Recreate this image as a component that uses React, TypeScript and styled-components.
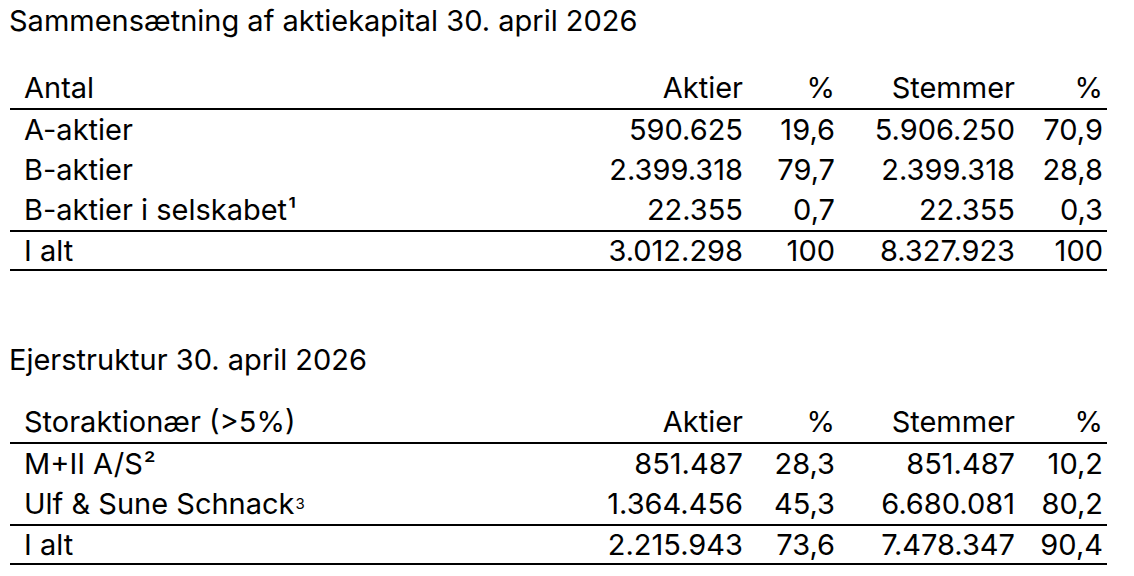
import styled, { createGlobalStyle } from 'styled-components';

const GlobalStyle = createGlobalStyle`
  html, body {
    margin: 0;
    padding: 0;
    background: #ffffff;
  }
  body {
    font-family: Inter, 'Liberation Sans', Arial, sans-serif;
    color: #000000;
  }
`;

const Page = styled.div`
  width: 1134px;
  height: 576px;
  padding-top: 1px;
  box-sizing: border-box;
  overflow: hidden;
`;

const Title = styled.h2<{ $gap: number }>`
  margin: ${({ $gap }) => $gap}px 0 0 9px;
  font-size: 29px;
  font-weight: 400;
  line-height: 40px;
`;

const Table = styled.div<{ $gap: number }>`
  margin: ${({ $gap }) => $gap}px 0 0 10px;
  width: 1097px;
  font-size: 29px;
`;

const Row = styled.div<{ $kind?: 'head' | 'total' }>`
  display: grid;
  grid-template-columns: 1fr 200px 92px 180px 88px;
  align-items: center;
  padding: 0 4px 0 14px;
  height: ${({ $kind }) => ($kind === 'total' ? 37 : 40)}px;
  line-height: ${({ $kind }) => ($kind === 'total' ? 37 : 40)}px;
  border-top: ${({ $kind }) => ($kind === 'total' ? '2px solid #000' : 'none')};
  border-bottom: ${({ $kind }) =>
    $kind === 'head' || $kind === 'total' ? '2px solid #000' : 'none'};
`;

const Label = styled.span`
  white-space: nowrap;
`;

const Num = styled.span`
  text-align: right;
  white-space: nowrap;
`;

const Note = styled.span<{ $small?: boolean }>`
  font-size: ${({ $small }) => ($small ? '15px' : '27px')};
  vertical-align: ${({ $small }) => ($small ? '5px' : '0')};
  line-height: 0;
  margin-left: 1px;
`;

type Line = { label: React.ReactNode; values: string[] };

const capital: Line[] = [
  { label: 'A-aktier', values: ['590.625', '19,6', '5.906.250', '70,9'] },
  { label: 'B-aktier', values: ['2.399.318', '79,7', '2.399.318', '28,8'] },
  {
    label: (
      <>
        B-aktier i selskabet<Note>¹</Note>
      </>
    ),
    values: ['22.355', '0,7', '22.355', '0,3'],
  },
];

const owners: Line[] = [
  {
    label: (
      <>
        M+II A/S<Note>²</Note>
      </>
    ),
    values: ['851.487', '28,3', '851.487', '10,2'],
  },
  {
    label: (
      <>
        Ulf &amp; Sune Schnack<Note $small>3</Note>
      </>
    ),
    values: ['1.364.456', '45,3', '6.680.081', '80,2'],
  },
];

function DataTable({
  gap,
  head,
  rows,
  total,
}: {
  gap: number;
  head: string;
  rows: Line[];
  total: string[];
}) {
  return (
    <Table $gap={gap}>
      <Row $kind="head">
        <Label>{head}</Label>
        <Num>Aktier</Num>
        <Num>%</Num>
        <Num>Stemmer</Num>
        <Num>%</Num>
      </Row>
      {rows.map((r, i) => (
        <Row key={i}>
          <Label>{r.label}</Label>
          {r.values.map((v, j) => (
            <Num key={j}>{v}</Num>
          ))}
        </Row>
      ))}
      <Row $kind="total">
        <Label>I alt</Label>
        {total.map((v, j) => (
          <Num key={j}>{v}</Num>
        ))}
      </Row>
    </Table>
  );
}

export default function App() {
  return (
    <>
      <GlobalStyle />
      <Page>
        <Title $gap={0}>Sammensætning af aktiekapital 30. april 2026</Title>
        <DataTable
          gap={27}
          head="Antal"
          rows={capital}
          total={['3.012.298', '100', '8.327.923', '100']}
        />
        <Title $gap={69}>Ejerstruktur 30. april 2026</Title>
        <DataTable
          gap={22}
          head="Storaktionær (>5%)"
          rows={owners}
          total={['2.215.943', '73,6', '7.478.347', '90,4']}
        />
      </Page>
    </>
  );
}
